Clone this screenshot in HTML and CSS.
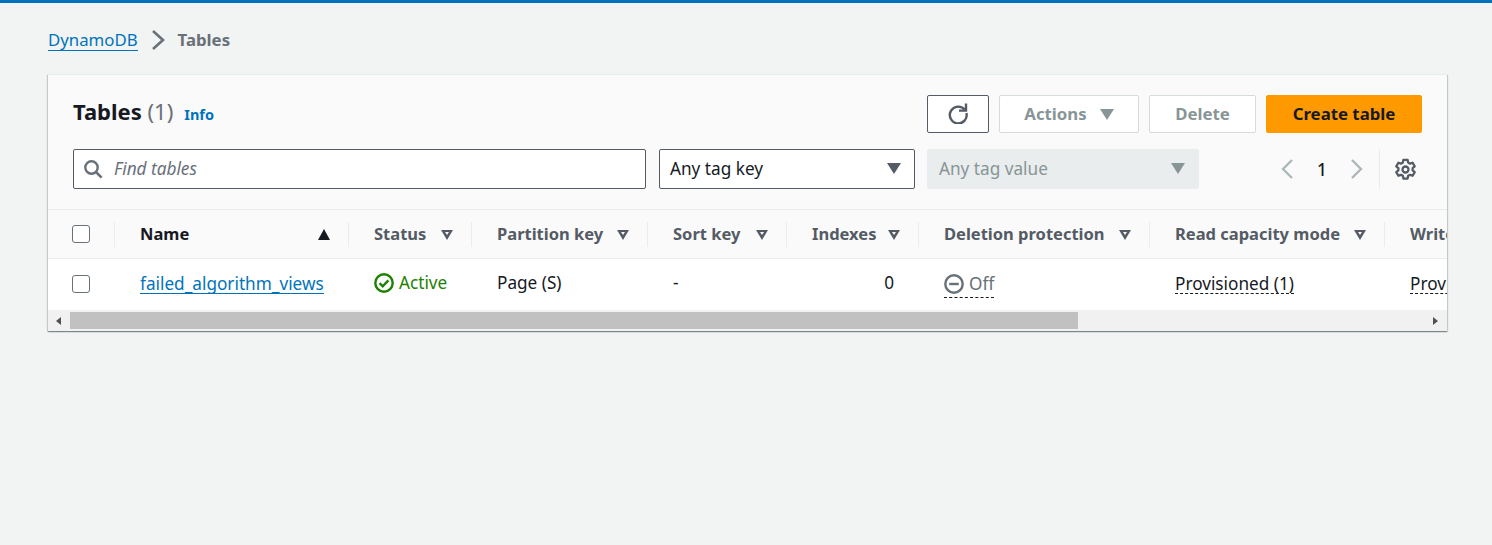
FILE: index.html
```html
<!DOCTYPE html>
<html>
<head>
  <meta charset="utf-8">
  <title>Tables</title>
  <link rel="stylesheet" href="styles.css">
</head>
<body>

<div class="topbar"></div>

<nav class="crumbs">
  <a class="link" href="#">DynamoDB</a>
  <svg class="crumb-sep" width="18" height="22" viewBox="0 0 18 22"><path d="M3 2l10 9-10 9" fill="none" stroke="#687078" stroke-width="2.6"/></svg>
  <span class="crumb-current">Tables</span>
</nav>

<section class="card">
  <div class="card-head">
    <div class="title-row">
      <h1 class="title">Tables <span class="count">(1)</span></h1>
      <a class="info" href="#">Info</a>
      <div class="actions">
        <button class="btn btn-icon">
          <svg width="22" height="22" viewBox="0 0 22 22"><path d="M17.8 7.8A8.4 8.4 0 1 0 19.4 11" fill="none" stroke="#545b64" stroke-width="2.4"/><path d="M19 1.6v7h-7" fill="none" stroke="#545b64" stroke-width="2.4"/></svg>
        </button>
        <button class="btn btn-off btn-actions">Actions <i class="caret caret-off"></i></button>
        <button class="btn btn-off btn-delete">Delete</button>
        <button class="btn btn-primary">Create table</button>
      </div>
    </div>
    <div class="filter-row">
      <div class="search">
        <svg width="20" height="20" viewBox="0 0 20 20"><circle cx="8.5" cy="8.5" r="6.2" fill="none" stroke="#687078" stroke-width="2.4"/><path d="M13 13l5.6 5.6" stroke="#687078" stroke-width="2.6"/></svg>
        <span class="placeholder">Find tables</span>
      </div>
      <div class="select">Any tag key <i class="caret"></i></div>
      <div class="select select-off">Any tag value <i class="caret caret-off"></i></div>
      <div class="pager">
        <svg width="14" height="20" viewBox="0 0 14 20"><path d="M12 1L3 10l9 9" fill="none" stroke="#aab7b8" stroke-width="2.3"/></svg>
        <span class="page-num">1</span>
        <svg width="14" height="20" viewBox="0 0 14 20"><path d="M2 1l9 9-9 9" fill="none" stroke="#aab7b8" stroke-width="2.3"/></svg>
        <span class="pager-sep"></span>
        <svg class="gear" width="23" height="23" viewBox="0 0 20 20">
          <circle cx="10" cy="10" r="2.6" fill="none" stroke="#545b64" stroke-width="2"/>
          <path d="M8.2 1.6h3.6l.5 2.4 1.6.9 2.3-.8 1.8 3.1-1.8 1.6v1.9l1.8 1.6-1.8 3.1-2.3-.8-1.6.9-.5 2.4H8.2l-.5-2.4-1.6-.9-2.3.8-1.8-3.1 1.8-1.6V8.8L2 7.2l1.8-3.1 2.3.8 1.6-.9z" fill="none" stroke="#545b64" stroke-width="2" stroke-linejoin="round"/>
        </svg>
      </div>
    </div>
  </div>

  <div class="table">
    <div class="row row-head">
      <div class="cell cell-check"><span class="check"></span></div>
      <div class="cell th th-sorted">Name <i class="sort-up"></i></div>
      <div class="cell th">Status <i class="sort"></i></div>
      <div class="cell th">Partition key <i class="sort"></i></div>
      <div class="cell th">Sort key <i class="sort"></i></div>
      <div class="cell th">Indexes <i class="sort"></i></div>
      <div class="cell th">Deletion protection <i class="sort"></i></div>
      <div class="cell th">Read capacity mode <i class="sort"></i></div>
      <div class="cell th th-last">Write capacity mode</div>
    </div>
    <div class="row row-body">
      <div class="cell cell-check"><span class="check"></span></div>
      <div class="cell"><a class="link" href="#">failed_algorithm_views</a></div>
      <div class="cell status-ok">
        <svg width="20" height="20" viewBox="0 0 20 20"><circle cx="10" cy="10" r="8.7" fill="none" stroke="#1d8102" stroke-width="2.4"/><path d="M5.6 10.2l3.1 3.1 5.7-6" fill="none" stroke="#1d8102" stroke-width="2.4"/></svg>
        Active
      </div>
      <div class="cell">Page (S)</div>
      <div class="cell">-</div>
      <div class="cell cell-num">0</div>
      <div class="cell">
        <span class="status-off">
          <svg width="20" height="20" viewBox="0 0 20 20"><circle cx="10" cy="10" r="8.7" fill="none" stroke="#687078" stroke-width="2.4"/><path d="M5.2 10h9.6" stroke="#687078" stroke-width="2.4"/></svg>
          Off
        </span>
      </div>
      <div class="cell"><span class="dotted">Provisioned (1)</span></div>
      <div class="cell cell-last"><span class="dotted">Provisioned (1)</span></div>
    </div>
  </div>

  <div class="scrollbar">
    <i class="arrow arrow-left"></i>
    <div class="thumb"></div>
    <i class="arrow arrow-right"></i>
  </div>
</section>

</body>
</html>
```

FILE: styles.css
```css
* {
  box-sizing: border-box;
}

body {
  margin: 0;
  height: 545px;
  overflow: hidden;
  background: #f2f3f3;
  color: #16191f;
  font-family: "Noto Sans", sans-serif;
  font-size: 17.2px;
}

.topbar {
  height: 3px;
  background: #0073bb;
}

.link {
  display: inline-block;
  color: #0073bb;
  text-decoration: none;
  border-bottom: 1px solid #0073bb;
  line-height: 20px;
}

.crumbs {
  display: flex;
  align-items: center;
  height: 22px;
  margin: 26px 0 0 48px;
  font-size: 16.8px;
}

.crumb-sep {
  margin: 0 10px 0 12px;
}

.crumb-current {
  margin-bottom: 2px;
  color: #687078;
  font-weight: 700;
}

.card {
  width: 1399px;
  margin: 23px 0 0 48px;
  background: #fff;
  box-shadow: 0 1px 1px 0 rgba(0, 28, 36, .3), 1px 1px 1px 0 rgba(0, 28, 36, .15), -1px 1px 1px 0 rgba(0, 28, 36, .15);
  border-top: 1px solid #eaeded;
}

.card-head {
  height: 135px;
  padding: 20px 25px 0;
  background: #fafafa;
  border-bottom: 1px solid #eaeded;
}

.title-row {
  display: flex;
  align-items: center;
  height: 38px;
}

.title {
  margin: 0 0 6px;
  font-size: 22px;
  font-weight: 700;
}

.count {
  color: #687078;
  font-weight: 400;
}

.info {
  margin-left: 11px;
  color: #0073bb;
  font-size: 14.5px;
  font-weight: 700;
  text-decoration: none;
}

.actions {
  display: flex;
  gap: 10px;
  margin-left: auto;
}

.btn {
  display: flex;
  align-items: center;
  justify-content: center;
  height: 38px;
  padding: 0 0 2px;
  border: 1px solid #545b64;
  border-radius: 2px;
  background: #fff;
  font-family: inherit;
  font-size: 16.8px;
  font-weight: 700;
}

.btn-icon {
  width: 62px;
}

.btn-off {
  border-color: #d5dbdb;
  color: #879596;
}

.btn-actions {
  gap: 13px;
  width: 140px;
}

.btn-actions .caret {
  margin-top: 2px;
}

.btn-delete {
  width: 107px;
}

.btn-primary {
  width: 156px;
  border-color: #ff9900;
  background: #ff9900;
  color: #16191f;
}

.caret {
  width: 0;
  height: 0;
  border-left: 7.5px solid transparent;
  border-right: 7.5px solid transparent;
  border-top: 11px solid #545b64;
}

.caret-off {
  border-top-color: #879596;
}

.filter-row {
  display: flex;
  align-items: stretch;
  height: 40px;
  margin-top: 16px;
}

.search {
  display: flex;
  align-items: center;
  gap: 11px;
  width: 573px;
  padding: 0 0 1px 9px;
  border: 1px solid #545b64;
  border-radius: 2px;
  background: #fff;
}

.placeholder {
  color: #687078;
  font-style: italic;
}

.select {
  display: flex;
  align-items: center;
  justify-content: space-between;
  width: 256px;
  margin-left: 13px;
  padding: 0 13px 1px 10px;
  border: 1px solid #545b64;
  border-radius: 2px;
  background: #fff;
}

.select-off {
  width: 272px;
  margin-left: 12px;
  padding-left: 11px;
  border-color: #eaeded;
  background: #eaeded;
  color: #879596;
}

.pager {
  display: flex;
  align-items: center;
  margin-left: 81px;
}

.page-num {
  width: 56px;
  text-align: center;
  font-weight: 500;
}

.pager-sep {
  width: 1px;
  height: 40px;
  margin: 0 14px 0 15px;
  background: #eaeded;
}

.row {
  display: grid;
  grid-template-columns: 66px 234px 123px 176px 139px 132px 231px 235px 200px;
  overflow: hidden;
}

.row-head {
  height: 49px;
  background: #fafafa;
  border-bottom: 1px solid #eaeded;
}

.row-body {
  height: 51px;
  background: #fff;
}

.cell {
  display: flex;
  align-items: center;
  padding-left: 26px;
  white-space: nowrap;
}

.row-body .cell {
  padding-bottom: 4px;
}

.cell-check {
  padding-left: 24px;
}

.row-body .cell-check {
  padding-bottom: 2px;
}

.row-body .link,
.dotted {
  display: inline-block;
  padding-top: 3px;
  line-height: 18px;
}

.check {
  width: 18px;
  height: 18px;
  border: 1px solid #687078;
  border-radius: 3px;
  background: #fff;
}

.th {
  position: relative;
  justify-content: space-between;
  padding-right: 18px;
  padding-bottom: 2px;
  color: #545b64;
  font-size: 16.5px;
  font-weight: 700;
}

.th::before {
  content: "";
  position: absolute;
  left: 0;
  top: 12px;
  height: 25px;
  width: 1px;
  background: #eaeded;
}

.th-sorted {
  color: #16191f;
}

.sort {
  width: 0;
  height: 0;
  margin-top: 4px;
  border-left: 6.5px solid transparent;
  border-right: 6.5px solid transparent;
  border-top: 10px solid #545b64;
  position: relative;
}

.sort::after {
  content: "";
  position: absolute;
  left: -2.5px;
  top: -8px;
  border-left: 2.5px solid transparent;
  border-right: 2.5px solid transparent;
  border-top: 3.5px solid #fafafa;
}

.sort-up {
  width: 0;
  height: 0;
  margin-top: 2px;
  border-left: 6.5px solid transparent;
  border-right: 6.5px solid transparent;
  border-bottom: 11px solid #16191f;
}

.status-ok {
  gap: 5px;
  color: #1d8102;
}

.status-off {
  display: inline-flex;
  align-items: flex-start;
  gap: 5px;
  height: 24px;
  margin-top: 6px;
  color: #687078;
  border-bottom: 1px dashed #16191f;
  line-height: 20px;
}

.dotted {
  border-bottom: 1px dashed #16191f;
}

.cell-num {
  justify-content: flex-end;
  padding-right: 24px;
}

.scrollbar {
  display: flex;
  align-items: center;
  height: 21px;
  background: #f1f1f1;
}

.thumb {
  width: 1008px;
  height: 17px;
  background: #c1c1c1;
}

.arrow {
  width: 0;
  height: 0;
  border-top: 4px solid transparent;
  border-bottom: 4px solid transparent;
}

.arrow-left {
  margin: 0 9px 0 8px;
  border-right: 5px solid #505050;
}

.arrow-right {
  margin-left: auto;
  margin-right: 9px;
  border-left: 5px solid #505050;
}
```
